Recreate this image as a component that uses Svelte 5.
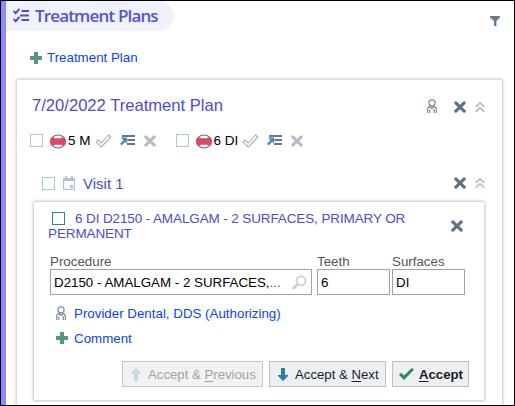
<script>
  const teeth = [
    { label: '5 M', gap: 0 },
    { label: '6 DI', gap: 20 }
  ];
</script>

{#snippet cross(color)}
  <svg class="ic" width="12" height="12" viewBox="0 0 12 12"><path d="M1.8 1.8L10.2 10.2M10.2 1.8L1.8 10.2" stroke={color} stroke-width="3.1" stroke-linecap="round" /></svg>
{/snippet}

{#snippet chevrons()}
  <svg class="ic chev" width="10" height="12" viewBox="0 0 10 12"><path d="M.7 5.8L5 1.8L9.3 5.8M.7 10.6L5 6.6L9.3 10.6" fill="none" stroke="#b1bbc5" stroke-width="1.7" /></svg>
{/snippet}

{#snippet person()}
  <svg class="ic" width="10" height="15" viewBox="0 0 10 15" fill="none" stroke="#6b7f92" stroke-width="1.1">
    <circle cx="5" cy="3.8" r="3.1" />
    <path d="M.7 14V9.8Q.7 8.2 3 7.6L5 9.5L7 7.6Q9.3 8.2 9.3 9.8V14M2.8 14V10.5M7.2 14V10.5" />
    <path d="M6.2 10.6H7.2" stroke="#d98270" />
  </svg>
{/snippet}

{#snippet plus()}
  <svg class="ic" width="12" height="12" viewBox="0 0 12 12"><path d="M4 0H8V4H12V8H8V12H4V8H0V4H4Z" fill="#56967a" /></svg>
{/snippet}

<div class="window">
  <header>
    <h1>
      <svg class="ic" width="16" height="15" viewBox="0 0 16 15" fill="none" stroke="#4f4fca" stroke-width="2">
        <path d="M.6 3L2.6 5.2L6.5 .8M.6 11L2.6 13.2L6.5 8.8M8.5 3H16M7 7.5H16M8.5 12H16" />
      </svg>
      <span>Treatment Plans</span>
    </h1>
    <svg class="ic filter" width="10" height="10" viewBox="0 0 10 10"><path d="M0 0H10V1.5L6.4 5V10H4V5L0 1.5Z" fill="#667b8f" /></svg>
  </header>

  <div class="add">{@render plus()}<a>Treatment Plan</a></div>

  <section class="plan">
    <div class="plan-head">
      <h2>7/20/2022 Treatment Plan</h2>
      <div class="tools">
        {@render person()}
        <span class="close">{@render cross('#5d7285')}</span>
        {@render chevrons()}
      </div>
    </div>

    <div class="teeth">
      {#each teeth as tooth}
        <div class="tooth" style:margin-left="{tooth.gap}px">
          <i class="box pale"></i>
          <svg class="ic ball" width="16" height="15" viewBox="0 0 16 15">
            <ellipse cx="8" cy="7.5" rx="7.3" ry="6.5" fill="#fff" stroke="#5f7386" stroke-width="1.1" />
            <path d="M1.8 3C3.5 2.6 4 4.2 5.2 4.2H10.8C12 4.2 12.5 2.6 14.2 3Q16 4.6 16 7.5Q16 10.4 14.2 12C12.5 12.4 12 10.8 10.8 10.8H5.2C4 10.8 3.5 12.4 1.8 12Q0 10.4 0 7.5Q0 4.6 1.8 3Z" fill="#dc4868" />
          </svg>
          <span class="name">{tooth.label}</span>
          <svg class="ic check" width="17" height="14" viewBox="0 0 17 14"><path d="M1 8.2L3.2 6L6.3 9L13.5 1L15.8 3L6.4 13Z" fill="#fff" stroke="#a5b0bb" stroke-width="1.1" stroke-linejoin="round" /></svg>
          <svg class="ic list" width="15" height="12" viewBox="0 0 15 12">
            <path d="M2 2H15M7.5 6H15M7 10H15" stroke="#64788b" stroke-width="2" />
            <path d="M1 3.4H7.2V9.5L5.2 7.8L1.6 11.4L0 9.8L3.4 6.2Z" fill="#438bb2" />
          </svg>
          <span class="remove">{@render cross('#b5bec7')}</span>
        </div>
      {/each}
    </div>

    <div class="visit-head">
      <i class="box pale"></i>
      <svg class="ic cal" width="12" height="14" viewBox="0 0 12 14"><path d="M2 0H4V2H8V0H10V2H12V14H0V2H2ZM1.2 5V12.8H10.8V5Z" fill="#b8c2cc" fill-rule="evenodd" /><path d="M7 9H10V12H7Z" fill="#b8c2cc" /></svg>
      <h3>Visit 1</h3>
      <div class="tools"><span class="close">{@render cross('#5d7285')}</span>{@render chevrons()}</div>
    </div>

    <article class="visit">
      <div class="visit-title">
        <p><i class="box"></i>6 DI D2150 - AMALGAM - 2 SURFACES, PRIMARY OR PERMANENT</p>
        <span class="drop">{@render cross('#5d7285')}</span>
      </div>

      <div class="fields">
        <div class="field procedure">
          <span class="label">Procedure</span>
          <div class="input"><span>D2150 - AMALGAM - 2 SURFACES,<em>...</em></span>
            <svg class="ic" width="15" height="15" viewBox="0 0 15 15" fill="none" stroke="#c9cfd5"><circle cx="9" cy="5.8" r="4.5" stroke-width="1.8" /><path d="M5.6 9.2L1.8 13" stroke-width="2.8" stroke-linecap="round" /></svg>
          </div>
        </div>
        <div class="field tooth-no"><span class="label">Teeth</span><div class="input"><span>6</span></div></div>
        <div class="field surfaces"><span class="label">Surfaces</span><div class="input"><span>DI</span></div></div>
      </div>

      <div class="link provider">{@render person()}<a>Provider Dental, DDS (Authorizing)</a></div>
      <div class="link comment">{@render plus()}<a>Comment</a></div>

      <div class="buttons">
        <button class="previous" disabled>
          <svg class="ic" width="10" height="13" viewBox="0 0 10 13"><path d="M5 0L10 5V6H7V13H3V6H0V5Z" fill="#c5d9e3" /></svg>
          <span>Accept &amp; <u>P</u>revious</span>
        </button>
        <button class="next">
          <svg class="ic" width="10" height="13" viewBox="0 0 10 13"><path d="M5 13L10 8V7H7V0H3V7H0V8Z" fill="#287fae" /></svg>
          <span>Accept &amp; <u>N</u>ext</span>
        </button>
        <button class="accept">
          <svg class="ic" width="15" height="12" viewBox="0 0 15 12"><path d="M0 7L2.2 4.8L5 7.5L12.8 0L15 1.5L5.2 12Z" fill="#38835f" /></svg>
          <span><u>A</u>ccept</span>
        </button>
      </div>
    </article>
  </section>
</div>

<style>
  .window { box-sizing: border-box; width: 515px; height: 406px; overflow: hidden; border: 1px solid #000; background: linear-gradient(90deg, #9189fb 5px, #fff 5px); padding-left: 5px; display: flex; flex-direction: column; font: 13.33px/15px "Liberation Sans", Arial, sans-serif; color: #000; }
  .ic { display: block; flex: none; }
  h1, h2, h3, p { margin: 0; font-weight: 400; color: #4c4ccb; white-space: nowrap; }
  a { color: #0b43ef; white-space: nowrap; }
  header { display: flex; height: 30px; flex: none; justify-content: space-between; }
  h1 { box-sizing: border-box; display: flex; width: 168px; height: 30px; padding: 0 0 0 7px; gap: 6px; align-items: center; border-radius: 0 15px 15px 0; background: #f0f1fa; color: #5454cd; font: 600 17px/30px "Open Sans", "Noto Sans", sans-serif; letter-spacing: -.84px; }
  h1 svg { margin-bottom: 2px; }
  .filter { margin: 15px 14px 0 0; }
  .add { display: flex; align-items: center; height: 16px; margin: 18px 0 0 24px; gap: 5px; flex: none; }
  .add :global(svg) { margin-top: 2px; }
  .plan { margin: 15px 12px 0 11px; height: 340px; flex: none; background: #fff; box-shadow: 0 0 3px 1px #c7c7c7; display: flex; flex-direction: column; border-radius: 1px; }
  .plan-head { display: flex; align-items: center; height: 51px; padding-left: 15px; justify-content: space-between; }
  h2 { font-size: 16.6px; line-height: 20px; }
  .tools { display: flex; align-items: center; margin-left: auto; padding-right: 17px; }
  .plan-head .tools { padding-top: 2px; }
  .close { margin: 0 9px 0 17px; }
  .teeth { display: flex; height: 18px; align-items: center; padding-left: 13px; }
  .tooth { display: flex; align-items: center; }
  .box { box-sizing: border-box; display: inline-block; flex: none; width: 13px; height: 13px; border: 1px solid #1f8f77; background: #fff; }
  .pale { border-color: #a5cfc2; }
  .ball { margin: 2px 2px 0 7px; }
  .name { font-size: 13.5px; padding-top: 1px; }
  .check { margin: 2px 0 0 4px; }
  .list { margin: 0 9px 0 8px; }
  .remove { padding-top: 2px; }
  .visit-head { display: flex; align-items: center; height: 20px; padding-left: 25px; margin-top: 24px; }
  .cal { margin: 0 8px; }
  h3 { font-size: 15px; }
  .visit { box-sizing: border-box; width: 450px; height: 198px; margin: 9px 0 0 17px; padding: 0 14px 0 14px; box-shadow: 0 0 3px 1px #c3c3c3; border-radius: 1px; display: flex; flex-direction: column; }
  .visit-title { display: flex; justify-content: space-between; padding-top: 9px; height: 43px; }
  .visit-title p { width: 385px; white-space: normal; font-size: 13.5px; line-height: 15px; letter-spacing: -.12px; }
  .visit-title .box { margin: 0 10px 0 4px; vertical-align: -2px; }
  .drop { margin: 9px 7px 0 0; }
  .fields { display: flex; gap: 5px; margin-left: 2px; }
  .field { display: flex; flex-direction: column; }
  .procedure { width: 262px; }
  .tooth-no { width: 73px; margin-right: -3px; }
  .surfaces { width: 73px; }
  .label { color: #555; height: 15px; }
  .input { box-sizing: border-box; display: flex; align-items: center; justify-content: space-between; height: 26px; padding: 0 4px 0 3px; border: 1px solid #a1a1a1; background: #fff; white-space: nowrap; }
  .input em { color: #555; font-style: normal; }
  .link { display: flex; align-items: center; height: 20px; padding-left: 8px; gap: 8px; margin-top: 8px; }
  .comment { margin-top: 5px; gap: 6px; }
  .buttons { display: flex; gap: 6px; margin: 13px 0 0 74px; }
  button { box-sizing: border-box; display: flex; align-items: center; height: 26px; padding: 0 0 0 8px; gap: 7px; border: 1px solid #b9c0c7; background: #ecf0f3; color: #1d1d1d; font: 13.2px/15px "Liberation Sans", Arial, sans-serif; white-space: nowrap; flex: none; }
  .previous { width: 141px; background: #f2f2f2; color: #a2a2a2; border-color: #c5c8ca; }
  .next { width: 117px; }
  .accept { width: 77px; padding-left: 6px; gap: 5px; font-weight: 700; }
  u { text-underline-offset: 2px; }
</style>
